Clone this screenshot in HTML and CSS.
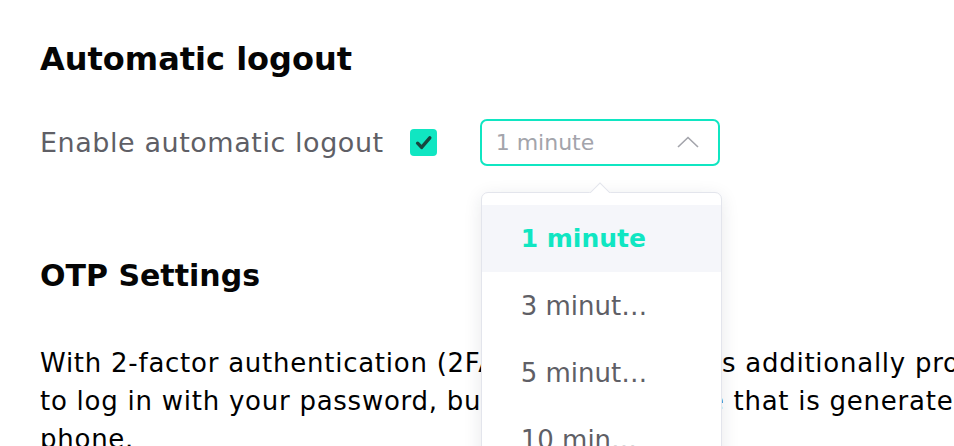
FILE: index.html
```html
<!DOCTYPE html>
<html lang="en">
<head>
<meta charset="utf-8">
<title>Settings</title>
<link rel="stylesheet" href="styles.css">
</head>
<body>
<main class="page">
  <section class="section">
    <h2 class="section-title">Automatic logout</h2>
    <div class="setting-row">
      <span class="setting-label">Enable automatic logout</span>
      <span class="checkbox" role="checkbox" aria-checked="true">
        <svg viewBox="0 0 27 27" width="27" height="27" aria-hidden="true">
          <path d="M7.6 14.2 L11.6 18.4 L19.8 8.9" fill="none" stroke="#17463f" stroke-width="3.4" stroke-linecap="round" stroke-linejoin="round"/>
        </svg>
      </span>
      <div class="select">
        <div class="select-box">
          <span class="select-value">1 minute</span>
          <svg class="chevron" viewBox="0 0 22 12" width="22" height="12" aria-hidden="true">
            <path d="M1 11 L11 1.5 L21 11" fill="none" stroke="#a3a4ab" stroke-width="1.6"/>
          </svg>
        </div>
        <div class="dropdown">
          <span class="dropdown-arrow"></span>
          <ul class="options">
            <li class="option option-active"><span class="option-text">1 minute</span></li>
            <li class="option"><span class="option-text">3 minutes</span></li>
            <li class="option"><span class="option-text">5 minutes</span></li>
            <li class="option"><span class="option-text">10 minutes</span></li>
          </ul>
        </div>
      </div>
    </div>
  </section>
  <section class="section">
    <h2 class="section-title section-title-otp">OTP Settings</h2>
    <p class="description">With 2-factor authentication (2FA), your account is additionally protected. You need not only<br>to log in with your password, but also with a code that is generated by an app on your mobile<br>phone.</p>
  </section>
</main>
</body>
</html>
```

FILE: styles.css
```css
html, body {
  margin: 0;
  padding: 0;
  overflow: hidden;
  background: #ffffff;
}

body {
  font-family: "DejaVu Sans", "Noto Sans", "Liberation Sans", sans-serif;
  color: #000000;
}

.page {
  padding-left: 40px;
  width: 1500px;
}

.section-title {
  margin: 39px 0 0;
  font-size: 32px;
  line-height: 40px;
  font-weight: 700;
  color: #050505;
}

.section-title-otp {
  margin-top: 90px;
  font-size: 30px;
}

.setting-row {
  margin-top: 40px;
  display: flex;
  align-items: center;
  height: 47px;
}

.setting-label {
  font-size: 27px;
  letter-spacing: 0.55px;
  color: #5f5f66;
}

.checkbox {
  margin-left: 26px;
  width: 27px;
  height: 27px;
  border-radius: 4px;
  background: #10e6c2;
  display: flex;
}

.select {
  position: relative;
  margin-left: 43px;
  width: 240px;
}

.select-box {
  box-sizing: border-box;
  height: 47px;
  border: 2px solid #10e6c2;
  border-radius: 7px;
  display: flex;
  align-items: center;
  justify-content: space-between;
  padding: 0 19px 0 14px;
}

.select-value {
  font-size: 22px;
  color: #a3a4ab;
}

.chevron {
  display: block;
  margin-top: -2px;
}

.dropdown {
  position: absolute;
  top: 73px;
  left: 1px;
  width: 241px;
  box-sizing: border-box;
  background: #ffffff;
  border: 1px solid #e3e5ec;
  border-radius: 7px;
  box-shadow: 0 4px 18px rgba(30, 35, 60, 0.10);
  padding-top: 12px;
  height: 300px;
}

.dropdown-arrow {
  position: absolute;
  top: -12px;
  left: 106px;
  width: 24px;
  height: 12px;
  overflow: hidden;
}

.dropdown-arrow::before {
  content: "";
  position: absolute;
  left: 3.5px;
  top: 5px;
  width: 16px;
  height: 16px;
  background: #ffffff;
  border: 1px solid #e3e5ec;
  transform: rotate(45deg);
}

.options {
  list-style: none;
  margin: 0;
  padding: 0;
}

.option {
  height: 67px;
  display: flex;
  align-items: center;
  padding-left: 39px;
  font-size: 26px;
  color: #5f5f66;
}

.option-text {
  display: block;
  max-width: 128px;
  white-space: nowrap;
  overflow: hidden;
  text-overflow: ellipsis;
}

.option-active {
  background: #f5f6fa;
  color: #10e6c2;
  font-size: 25px;
  font-weight: 700;
}

.option-active .option-text {
  max-width: none;
}

.description {
  margin: 48px 0 0;
  font-size: 26px;
  letter-spacing: 0.75px;
  line-height: 38px;
  color: #000000;
}
```
